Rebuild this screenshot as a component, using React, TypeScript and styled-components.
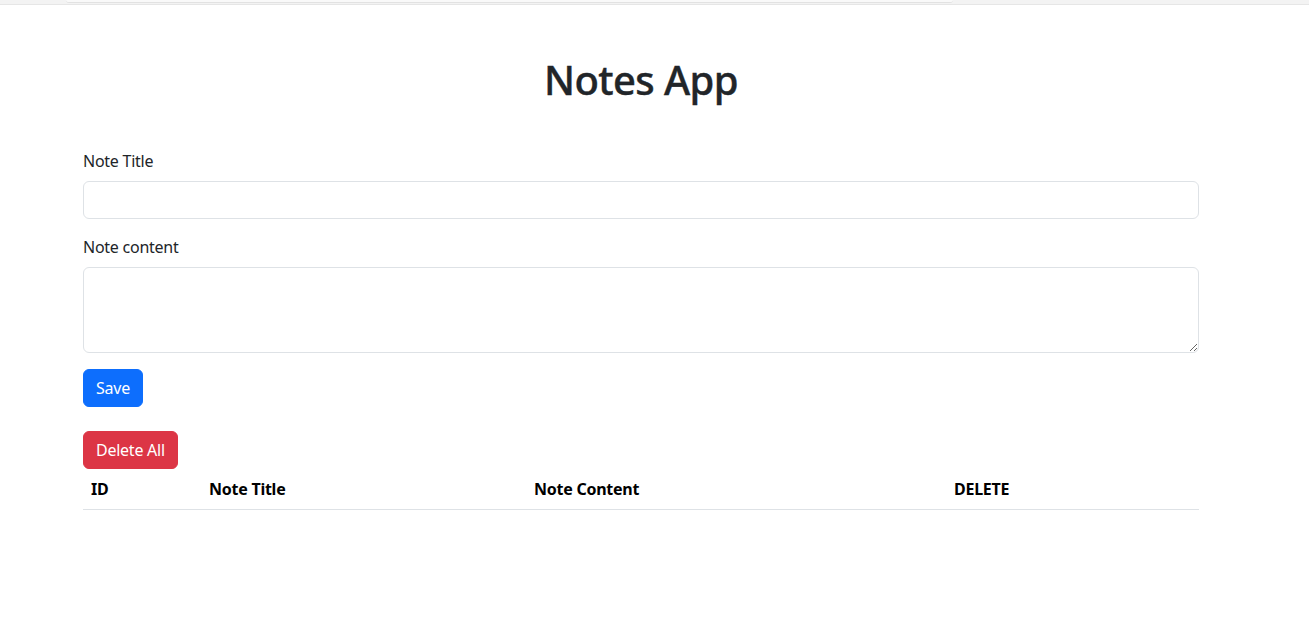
import styled, { createGlobalStyle } from 'styled-components';

const GlobalStyle = createGlobalStyle`
  * {
    box-sizing: border-box;
  }

  body {
    margin: 0;
    background: #fff;
    color: #212529;
    font-family: 'Segoe UI', 'Noto Sans', sans-serif;
    font-size: 16px;
    line-height: 1.5;
    letter-spacing: -0.25px;
  }
`;

const columns = [
  { label: 'ID', width: 118 },
  { label: 'Note Title', width: 325 },
  { label: 'Note Content', width: 420 },
  { label: 'DELETE', width: 253 },
];

function App() {
  return (
    <>
      <GlobalStyle />
      <TopStrip>
        <TabBar />
      </TopStrip>
      <Container>
        <Title>Notes App</Title>
        <Field>
          <Label htmlFor="note-title">Note Title</Label>
          <Input id="note-title" type="text" />
        </Field>
        <Field>
          <Label htmlFor="note-content">Note content</Label>
          <TextArea id="note-content" rows={3} />
        </Field>
        <Button $variant="primary">Save</Button>
        <Button $variant="danger" $top={24}>
          Delete All
        </Button>
        <Table>
          <thead>
            <tr>
              {columns.map((col) => (
                <HeadCell key={col.label} style={{ width: col.width }}>
                  {col.label}
                </HeadCell>
              ))}
            </tr>
          </thead>
          <tbody />
        </Table>
      </Container>
    </>
  );
}

export default App;

const TopStrip = styled.div`
  height: 5px;
  padding-left: 66px;
  background: #f3f3f3;
  border-bottom: 1px solid #e6e6e6;
`;

const TabBar = styled.div`
  width: 887px;
  height: 3px;
  background: #f9f9f9;
  border-bottom: 1px solid #e2e2e2;
  border-radius: 0 0 4px 4px;
`;

const Container = styled.main`
  width: 1116px;
  margin-left: 83px;
  padding-top: 51px;
`;

const Title = styled.h1`
  margin: 0 0 45px;
  font-size: 40px;
  font-weight: 500;
  line-height: 1.2;
  letter-spacing: -0.6px;
  text-align: center;
  color: #212529;
  -webkit-text-stroke: 0.4px #212529;
`;

const Field = styled.div`
  display: flex;
  flex-direction: column;
  margin-bottom: 16px;
`;

const Label = styled.label`
  margin-bottom: 8px;
`;

const controlStyles = `
  display: block;
  width: 100%;
  padding: 6px 12px;
  font-family: inherit;
  font-size: 16px;
  line-height: 1.5;
  color: #212529;
  background: #fff;
  border: 1px solid #dee2e6;
  border-radius: 6px;
  outline: none;
`;

const Input = styled.input`
  ${controlStyles}
  height: 38px;
`;

const TextArea = styled.textarea`
  ${controlStyles}
  height: 86px;
  resize: vertical;
`;

const Button = styled.button<{ $variant: 'primary' | 'danger'; $top?: number }>`
  display: block;
  margin-top: ${({ $top }) => $top ?? 0}px;
  padding: 6px 12px;
  font-family: inherit;
  font-size: 16px;
  line-height: 1.5;
  letter-spacing: -0.25px;
  color: #fff;
  border: 1px solid ${({ $variant }) => ($variant === 'primary' ? '#0d6efd' : '#dc3545')};
  border-radius: 6px;
  background: ${({ $variant }) => ($variant === 'primary' ? '#0d6efd' : '#dc3545')};
  cursor: pointer;
`;

const Table = styled.table`
  width: 100%;
  border-collapse: collapse;
  table-layout: fixed;
`;

const HeadCell = styled.th`
  padding: 8px;
  text-align: left;
  font-weight: 700;
  color: #000;
  border-bottom: 1px solid #dee2e6;
`;
